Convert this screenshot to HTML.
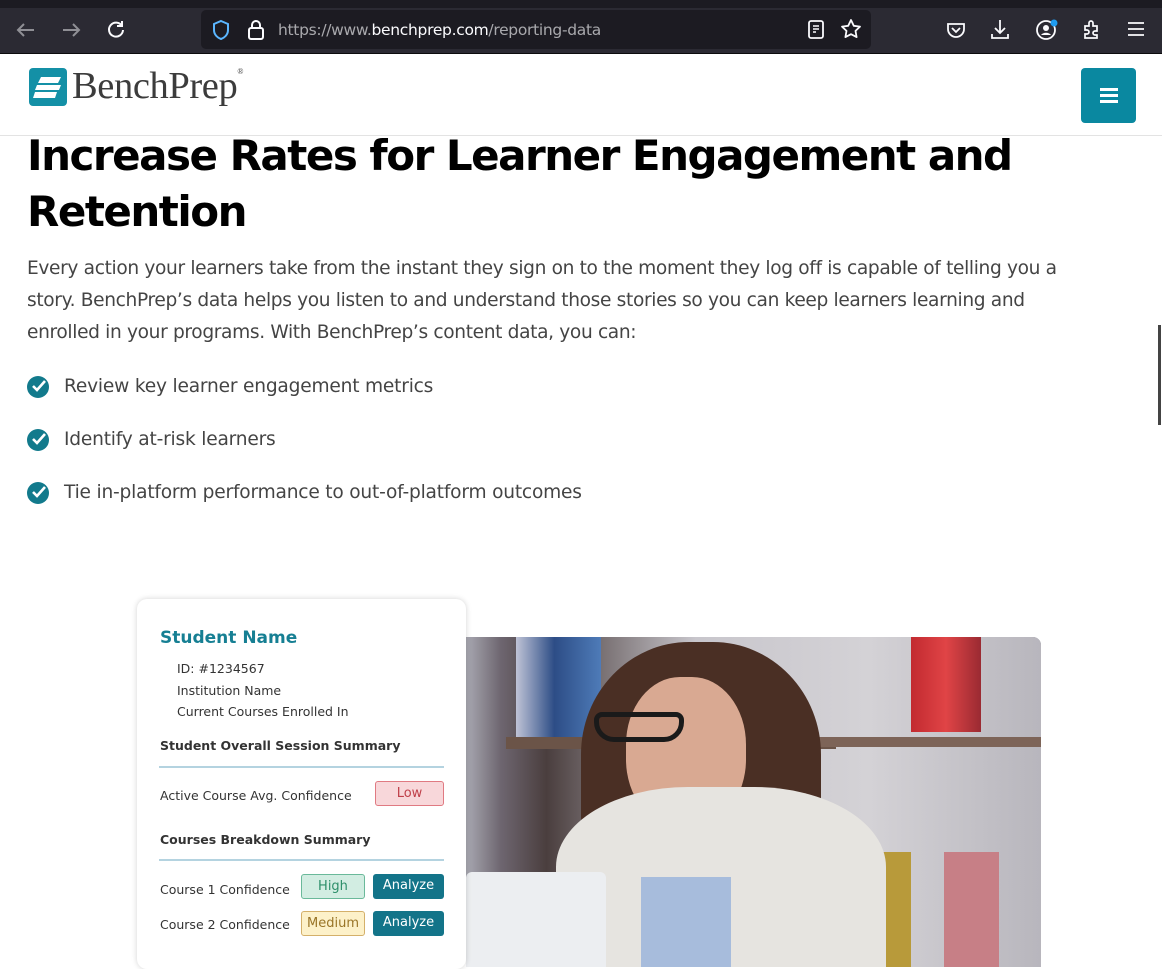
<!DOCTYPE html>
<html><head><meta charset="utf-8"><style>
*{margin:0;padding:0;box-sizing:border-box}
body{width:1162px;height:958px;overflow:hidden;background:#fff;font-family:"DejaVu Sans","Liberation Sans",sans-serif;position:relative}
.top{position:absolute;left:0;top:0;width:1162px;height:8px;background:#1c1b22}
.tb{position:absolute;left:0;top:8px;width:1162px;height:46px;background:#2b2a33;border-bottom:1px solid #0c0c0d}
.url{position:absolute;left:201px;top:10px;width:670px;height:39px;background:#1c1b22;border-radius:5px}
.url span{position:absolute;left:77px;top:11px;font-family:"DejaVu Sans",sans-serif;font-size:15.5px;color:#a9a9ad;letter-spacing:-0.3px}
.url b{font-weight:normal;color:#fbfbfe}
svg{position:absolute}
.hdr{position:absolute;left:0;top:55px;width:1162px;height:81px;border-bottom:1px solid #e3e3e3}
.menu{position:absolute;left:1081px;top:68px;width:55px;height:55px;background:#0a88a0;border-radius:4px}
.menu i{position:absolute;left:19px;width:18px;height:3px;background:#fff}
h1{position:absolute;left:27px;top:128px;font-size:42px;line-height:56px;font-weight:bold;color:#000;letter-spacing:-1.5px;width:1100px}
.p{position:absolute;left:27px;top:253px;width:1065px;font-size:18.6px;line-height:32px;color:#444;letter-spacing:-0.35px}
.li{position:absolute;left:64px;font-size:18.6px;color:#444;letter-spacing:-0.2px}
.ck{position:absolute;left:27px;width:22px;height:22px;border-radius:50%;background:#127a8c}
.card{position:absolute;left:137px;top:599px;width:329px;height:370px;background:#fff;border-radius:10px;box-shadow:0 0 6px rgba(0,0,0,.18);font-family:"DejaVu Sans",sans-serif;color:#333}
.photo{position:absolute;left:466px;top:637px;width:575px;height:330px;border-radius:0 8px 0 0;overflow:hidden;background:#8a8a93}
.badge{position:absolute;height:25px;border-radius:3px;font-size:13px;text-align:center;line-height:23px}
</style></head><body>
<div class="top"></div>
<div class="tb"></div>
<svg style="left:14px;top:20px" width="24" height="20" viewBox="0 0 24 20"><path d="M20 10H4M10 4L4 10l6 6" stroke="#8f8f95" stroke-width="2" fill="none"/></svg>
<svg style="left:59px;top:20px" width="24" height="20" viewBox="0 0 24 20"><path d="M4 10h16M14 4l6 6-6 6" stroke="#8f8f95" stroke-width="2" fill="none"/></svg>
<svg style="left:105px;top:18px" width="22" height="22" viewBox="0 0 22 22"><path d="M17 8A7 7 0 1 0 18 12M17 3v5h-5" stroke="#fbfbfe" stroke-width="2" fill="none"/></svg>
<div class="url"><span>https://www.<b>benchprep.com</b>/reporting-data</span></div>
<svg style="left:211px;top:19px" width="20" height="22" viewBox="0 0 20 22"><path d="M10 2l7 3v6c0 5-4 8-7 9-3-1-7-4-7-9V5z" stroke="#5bb6ff" stroke-width="2" fill="none"/></svg>
<svg style="left:246px;top:18px" width="20" height="24" viewBox="0 0 20 24"><rect x="3" y="10" width="14" height="11" rx="2" stroke="#fbfbfe" stroke-width="2" fill="none"/><path d="M6 10V7a4 4 0 0 1 8 0v3" stroke="#fbfbfe" stroke-width="2" fill="none"/></svg>
<svg style="left:806px;top:19px" width="20" height="22" viewBox="0 0 20 22"><rect x="3" y="2" width="14" height="17" rx="2" stroke="#fbfbfe" stroke-width="1.8" fill="none"/><path d="M7 7h6M7 10h6M7 13h3" stroke="#fbfbfe" stroke-width="1.6"/></svg>
<svg style="left:840px;top:18px" width="22" height="22" viewBox="0 0 22 22"><path d="M11 2l2.8 5.8 6.2.8-4.5 4.3 1.1 6.2L11 16.2 5.4 19.1l1.1-6.2L2 8.6l6.2-.8z" stroke="#fbfbfe" stroke-width="1.8" fill="none" stroke-linejoin="round"/></svg>
<svg style="left:945px;top:19px" width="22" height="22" viewBox="0 0 22 22"><path d="M3 5h16v5a8 8 0 0 1-16 0z" stroke="#fbfbfe" stroke-width="1.8" fill="none"/><path d="M7 9l4 4 4-4" stroke="#fbfbfe" stroke-width="1.8" fill="none"/></svg>
<svg style="left:989px;top:18px" width="22" height="22" viewBox="0 0 22 22"><path d="M11 2v13M6 10l5 5 5-5M3 16v4h16v-4" stroke="#fbfbfe" stroke-width="1.8" fill="none"/></svg>
<svg style="left:1035px;top:18px" width="26" height="24" viewBox="0 0 26 24"><circle cx="11" cy="12" r="9" stroke="#fbfbfe" stroke-width="1.8" fill="none"/><circle cx="11" cy="10" r="3" fill="#fbfbfe"/><path d="M6 17c2-3 8-3 10 0" fill="#fbfbfe"/><circle cx="19" cy="5" r="3.5" fill="#1f9cf0"/></svg>
<svg style="left:1081px;top:18px" width="22" height="22" viewBox="0 0 22 22"><path d="M4 8h4V5a2 2 0 0 1 4 0v3h4v5h-2a2 2 0 0 0 0 4h2v3H4v-4h2a2 2 0 0 0 0-4H4z" stroke="#fbfbfe" stroke-width="1.7" fill="none"/></svg>
<svg style="left:1127px;top:20px" width="18" height="18" viewBox="0 0 18 18"><path d="M1 3h16M1 9h16M1 15h16" stroke="#fbfbfe" stroke-width="1.8"/></svg>

<div class="hdr"></div>
<svg style="left:29px;top:68px" width="38" height="38" viewBox="0 0 38 38"><rect width="38" height="38" rx="4" fill="#1490a6"/><path d="M12 9h20l-3 6H9zM8 17h24l-2 5H6zM6 24h22l-2 6H4z" fill="#fff"/></svg>
<div style="position:absolute;left:72px;top:64px;font-family:'Liberation Serif',serif;font-size:38.5px;color:#3c3c3c;letter-spacing:-0.4px">BenchPrep<sup style="font-size:8px;vertical-align:24px">®</sup></div>
<div class="menu"><i style="top:20px"></i><i style="top:26px"></i><i style="top:32px"></i></div>

<h1>Increase Rates for Learner Engagement and Retention</h1>
<div class="p">Every action your learners take from the instant they sign on to the moment they log off is capable of telling you a story. BenchPrep’s data helps you listen to and understand those stories so you can keep learners learning and enrolled in your programs. With BenchPrep’s content data, you can:</div>
<div class="ck" style="top:376px"></div><svg style="left:30px;top:378px" width="18" height="16" viewBox="0 0 18 16"><path d="M3 8l4 4 8-9" stroke="#fff" stroke-width="2.6" fill="none"/></svg>
<div class="li" style="top:376px">Review key learner engagement metrics</div>
<div class="ck" style="top:429px"></div><svg style="left:30px;top:431px" width="18" height="16" viewBox="0 0 18 16"><path d="M3 8l4 4 8-9" stroke="#fff" stroke-width="2.6" fill="none"/></svg>
<div class="li" style="top:429px">Identify at-risk learners</div>
<div class="ck" style="top:482px"></div><svg style="left:30px;top:484px" width="18" height="16" viewBox="0 0 18 16"><path d="M3 8l4 4 8-9" stroke="#fff" stroke-width="2.6" fill="none"/></svg>
<div class="li" style="top:482px">Tie in-platform performance to out-of-platform outcomes</div>

<div class="photo">
<div style="position:absolute;left:0;top:0;width:575px;height:330px;background:linear-gradient(90deg,#a9a9b2 0,#6e6670 6%,#4a3e3e 14%,#c8c6cc 40%,#d4d2d6 70%,#b8b6bd 100%)"></div>
<div style="position:absolute;left:50px;top:0;width:85px;height:100px;background:linear-gradient(90deg,#bfc3d6,#2d4d86 45%,#4e7bb8)"></div>
<div style="position:absolute;left:40px;top:100px;width:330px;height:12px;background:#6b5448"></div>
<div style="position:absolute;left:345px;top:100px;width:230px;height:10px;background:#7d6458"></div>
<div style="position:absolute;left:445px;top:0;width:70px;height:95px;background:linear-gradient(90deg,#c22a30,#e04446,#9a2a32)"></div>
<div style="position:absolute;left:405px;top:215px;width:40px;height:115px;background:#b89a3a"></div>
<div style="position:absolute;left:478px;top:215px;width:55px;height:115px;background:#c77f86"></div>
<div style="position:absolute;left:115px;top:5px;width:240px;height:250px;border-radius:45% 45% 30% 30%;background:#4a2f24"></div>
<div style="position:absolute;left:160px;top:40px;width:120px;height:150px;border-radius:45%;background:#d9a992"></div>
<div style="position:absolute;left:90px;top:150px;width:330px;height:200px;border-radius:40% 40% 0 0;background:#e6e4e0"></div>
<div style="position:absolute;left:175px;top:240px;width:90px;height:100px;background:#a7bcdc"></div>
<div style="position:absolute;left:0;top:235px;width:140px;height:100px;background:#eceef1;border-radius:6px 6px 0 0"></div>
<div style="position:absolute;left:128px;top:75px;width:90px;height:30px;border:5px solid #1a1a1a;border-radius:8px 8px 20px 20px"></div>
</div>

<div class="card">
<div style="position:absolute;left:23px;top:29px;font-size:17px;font-weight:bold;color:#167f93">Student Name</div>
<div style="position:absolute;left:40px;top:59px;font-size:12.5px;line-height:21.5px;color:#333">ID: #1234567<br>Institution Name<br>Current Courses Enrolled In</div>
<div style="position:absolute;left:23px;top:139px;font-size:12.5px;font-weight:bold">Student Overall Session Summary</div>
<div style="position:absolute;left:22px;top:167px;width:285px;height:2px;background:#b4d3e0"></div>
<div style="position:absolute;left:23px;top:189px;font-size:12.5px">Active Course Avg. Confidence</div>
<div class="badge" style="left:238px;top:182px;width:69px;background:#f8d7da;border:1px solid #e07a82;color:#c0404a">Low</div>
<div style="position:absolute;left:23px;top:233px;font-size:12.5px;font-weight:bold">Courses Breakdown Summary</div>
<div style="position:absolute;left:22px;top:260px;width:285px;height:2px;background:#b4d3e0"></div>
<div style="position:absolute;left:23px;top:283px;font-size:12.5px">Course 1 Confidence</div>
<div class="badge" style="left:164px;top:275px;width:64px;background:#d2ede2;border:1px solid #6ab99a;color:#2d8f6a">High</div>
<div class="badge" style="left:236px;top:275px;width:71px;background:#137489;color:#fff">Analyze</div>
<div style="position:absolute;left:23px;top:318px;font-size:12.5px">Course 2 Confidence</div>
<div class="badge" style="left:164px;top:312px;width:64px;background:#fdf1c9;border:1px solid #d4b06a;color:#9a7528">Medium</div>
<div class="badge" style="left:236px;top:312px;width:71px;background:#137489;color:#fff">Analyze</div>
</div>
<div style="position:absolute;left:1158px;top:325px;width:3px;height:100px;background:#444"></div>
</body></html>
